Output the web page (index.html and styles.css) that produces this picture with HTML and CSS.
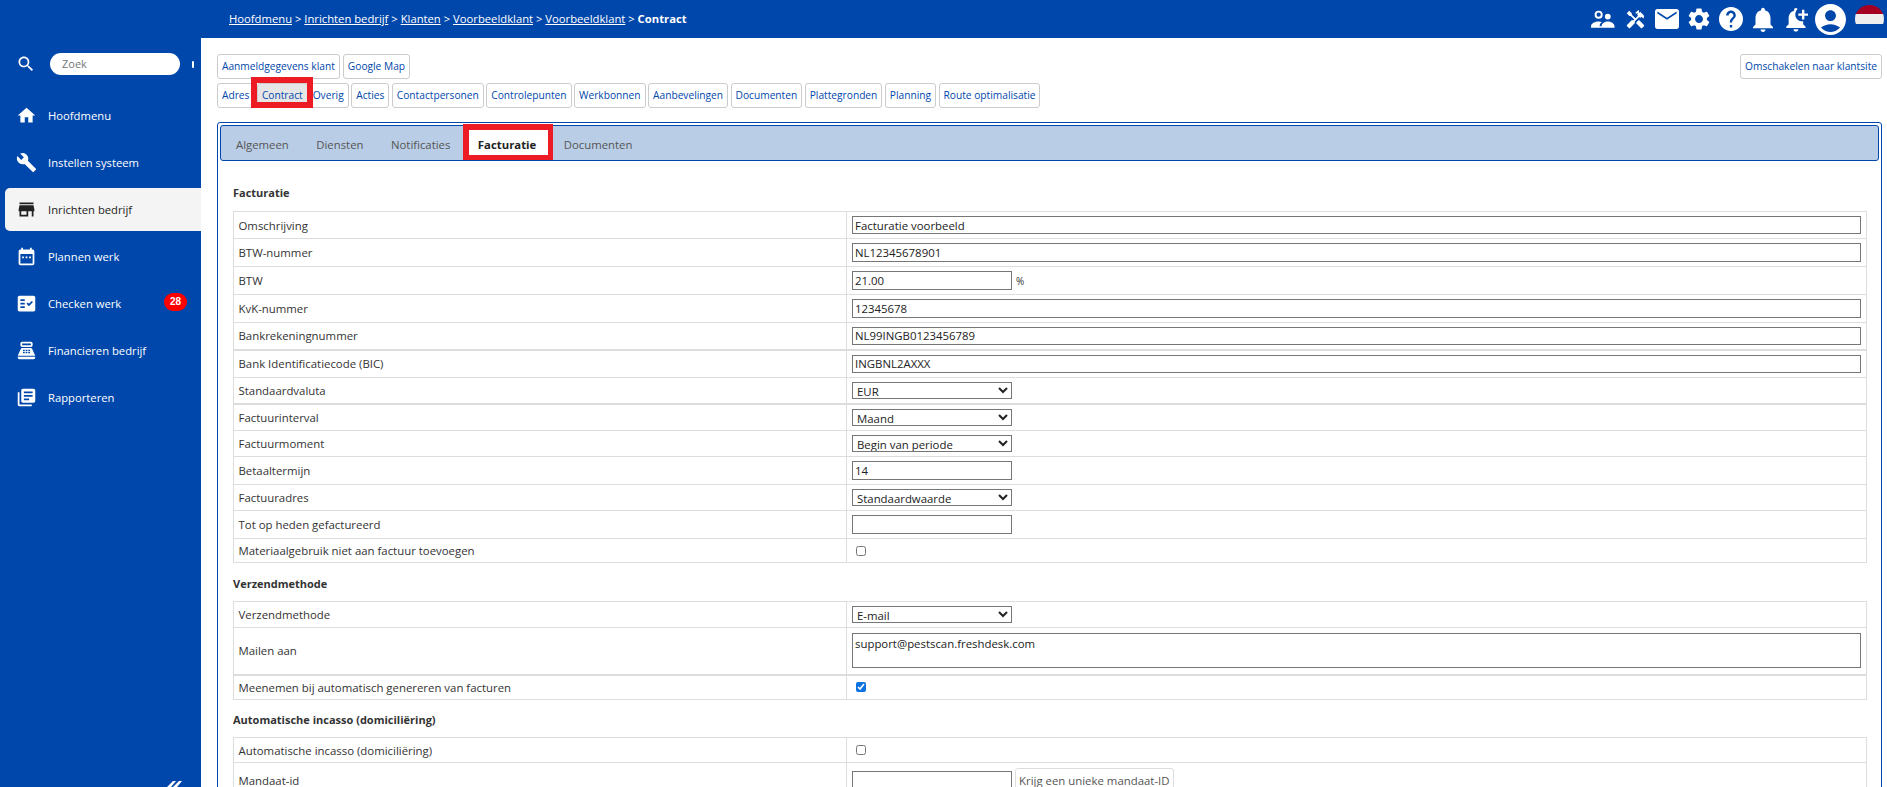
FILE: index.html
```html
<!DOCTYPE html>
<html lang="nl">
<head>
<meta charset="utf-8">
<title>Contract</title>
<link rel="stylesheet" href="styles.css">
</head>
<body>
<svg class="defs" width="0" height="0" aria-hidden="true">
  <symbol id="i-search" viewBox="0 0 24 24"><path d="M15.5 14h-.79l-.28-.27C15.41 12.59 16 11.11 16 9.5 16 5.91 13.09 3 9.5 3S3 5.91 3 9.5 5.91 16 9.5 16c1.61 0 3.09-.59 4.23-1.57l.27.28v.79l5 4.99L20.49 19l-4.99-5zm-6 0C7.01 14 5 11.99 5 9.5S7.01 5 9.5 5 14 7.01 14 9.5 11.99 14 9.5 14z"/></symbol>
  <symbol id="i-home" viewBox="0 0 24 24"><path d="M10 20v-6h4v6h5v-8h3L12 3 2 12h3v8z"/></symbol>
  <symbol id="i-build" viewBox="0 0 24 24"><path d="M22.7 19l-9.1-9.1c.9-2.3.4-5-1.5-6.9-2-2-5-2.4-7.4-1.3L9 6 6 9 1.6 4.7C.4 7.1.9 10.1 2.9 12.1c1.9 1.9 4.6 2.4 6.9 1.5l9.1 9.1c.4.4 1 .4 1.4 0l2.3-2.3c.5-.4.5-1.1.1-1.4z"/></symbol>
  <symbol id="i-store" viewBox="0 0 24 24"><path d="M20 4H4v2h16V4zm1 10v-2l-1-5H4l-1 5v2h1v6h10v-6h4v6h2v-6h1zm-9 4H6v-4h6v4z"/></symbol>
  <symbol id="i-cal" viewBox="0 0 24 24"><path fill-rule="evenodd" d="M19 4h-1V2h-2v2H8V2H6v2H5a2 2 0 0 0-2 2v14a2 2 0 0 0 2 2h14a2 2 0 0 0 2-2V6a2 2 0 0 0-2-2zM5 9h14v11H5zM7 12h2v2H7zM11 12h2v2h-2zM15 12h2v2h-2z"/></symbol>
  <symbol id="i-check" viewBox="0 0 24 24"><path d="M20 3H4c-1.100 0-2 .9-2 2v14c0 1.100.9 2 2 2h16c1.100 0 2-.9 2-2V5c0-1.100-.9-2-2-2zM10 17H5v-2h5v2zm0-4H5v-2h5v2zm0-4H5V7h5v2zm4.820 6L12 12.160l1.410-1.410 1.410 1.420L17.990 9l1.420 1.420L14.820 15z"/></symbol>
  <symbol id="i-pos" viewBox="0 0 24 24"><path fill-rule="evenodd" d="M17 2H7a2 2 0 0 0-2 2v2a2 2 0 0 0 2 2h10a2 2 0 0 0 2-2V4a2 2 0 0 0-2-2zm0 4H7V4h10zM20 22H4a2 2 0 0 1-2-2v-1h20v1a2 2 0 0 1-2 2zM18.530 10.190A2 2 0 0 0 16.700 9H7.300a2 2 0 0 0-1.830 1.190L2 18h20zM8 11h2v1.500H8zm3 0h2v1.500h-2zm3 0h2v1.500h-2zM8 13.500h2V15H8zm3 0h2V15h-2zm3 0h2V15h-2z"/></symbol>
  <symbol id="i-books" viewBox="0 0 24 24"><path d="M4 6H2v14c0 1.100.9 2 2 2h14v-2H4V6zm16-4H8c-1.100 0-2 .9-2 2v12c0 1.100.9 2 2 2h12c1.100 0 2-.9 2-2V4c0-1.100-.9-2-2-2zm-1 9H9V9h10v2zm-4 4H9v-2h6v2zm4-8H9V5h10v2z"/></symbol>
</svg>

<header class="topbar">
  <nav class="crumbs"><a>Hoofdmenu</a> &gt; <a>Inrichten bedrijf</a> &gt; <a>Klanten</a> &gt; <a>Voorbeeldklant</a> &gt; <a>Voorbeeldklant</a> &gt; <b>Contract</b></nav>
  <div class="top-icons">
    <svg class="ti ti-people" viewBox="0 0 26 24"><circle cx="9" cy="7.500" r="3.200" fill="none" stroke="#fff" stroke-width="2"/><circle cx="18.500" cy="9.500" r="3"/><path d="M1 19.500c0-3 4.500-5 8-5 1.200 0 2.400.2 3.500.6C10.800 16 10 17.500 10 19.500H12c0-3 3.500-5 6.500-5s7 2 7 5V21H1z"/></svg>
    <svg class="ti ti-tools" viewBox="0 0 24 24"><path d="M21.670 18.170l-5.300-5.300h-.99l-2.540 2.540v.99l5.300 5.300c.39.39 1.020.39 1.410 0l2.120-2.120c.39-.38.39-1.020 0-1.410z"/><path d="M17.340 10.190l1.410-1.410 2.120 2.120c1.170-1.170 1.170-3.070 0-4.240l-3.540-3.540-1.410 1.410V1.710l-.7-.71-3.540 3.540.71.71h2.830l-1.410 1.410 1.060 1.060-2.890 2.890-4.130-4.130V5.060L4.830 2.040 2 4.870 5.030 7.900h1.410l4.130 4.130-.85.85H7.600l-5.300 5.300c-.39.39-.39 1.020 0 1.410l2.120 2.120c.39.39 1.020.39 1.410 0l5.300-5.300v-2.120l5.150-5.150 1.060 1.050z"/></svg>
    <svg class="ti ti-mail" viewBox="2 4 20 16" preserveAspectRatio="none"><path d="M20 4H4c-1.100 0-2 .9-2 2v12c0 1.100.9 2 2 2h16c1.100 0 2-.9 2-2V6c0-1.100-.9-2-2-2zm0 3.500l-8 5-8-5V6l8 5 8-5v1.500z"/></svg>
    <svg class="ti ti-gear" viewBox="2 2 20 20"><path d="M19.140 12.940c.04-.3.06-.61.06-.94 0-.32-.02-.64-.07-.94l2.030-1.580c.18-.14.23-.41.12-.61l-1.920-3.320c-.12-.22-.37-.29-.59-.22l-2.390.96c-.5-.38-1.030-.7-1.620-.94l-.36-2.540c-.04-.24-.24-.41-.48-.41h-3.840c-.24 0-.43.17-.47.41l-.36 2.540c-.59.24-1.130.57-1.620.94l-2.390-.96c-.22-.08-.47 0-.59.22L2.740 8.870c-.12.21-.08.47.12.61l2.030 1.580c-.05.3-.09.63-.09.94s.02.64.07.94l-2.030 1.580c-.18.14-.23.41-.12.61l1.920 3.320c.12.22.37.29.59.22l2.390-.96c.5.38 1.030.7 1.620.94l.36 2.540c.05.24.24.41.48.41h3.840c.24 0 .44-.17.47-.41l.36-2.540c.59-.24 1.130-.56 1.620-.94l2.390.96c.22.08.47 0 .59-.22l1.920-3.320c.12-.22.07-.47-.12-.61l-2.010-1.580zM12 15.600c-1.980 0-3.600-1.620-3.600-3.600s1.620-3.600 3.600-3.600 3.600 1.620 3.600 3.600-1.620 3.600-3.600 3.600z"/></svg>
    <svg class="ti ti-help" viewBox="2 2 20 20"><path d="M12 2C6.480 2 2 6.480 2 12s4.480 10 10 10 10-4.480 10-10S17.520 2 12 2zm1 17h-2v-2h2v2zm2.070-7.750l-.9.920C13.450 12.900 13 13.500 13 15h-2v-.5c0-1.100.45-2.100 1.170-2.830l1.240-1.260c.37-.36.59-.86.59-1.410 0-1.100-.9-2-2-2s-2 .9-2 2H8c0-2.210 1.790-4 4-4s4 1.790 4 4c0 .88-.36 1.680-.93 2.250z"/></svg>
    <svg class="ti ti-bell" viewBox="4 2 16 20"><path d="M12 22c1.100 0 2-.9 2-2h-4c0 1.100.89 2 2 2zm6-6v-5c0-3.070-1.640-5.640-4.500-6.320V4c0-.83-.67-1.500-1.500-1.500s-1.500.67-1.500 1.500v.68C7.630 5.360 6 7.920 6 11v5l-2 2v1h16v-1l-2-2z"/></svg>
    <svg class="ti ti-bellplus" viewBox="3 2 19 20"><path d="M12 22c1.100 0 2-.9 2-2h-4c0 1.100.89 2 2 2zM18 13.500V16l2 2v1H4v-1l2-2v-5c0-3.080 1.630-5.640 4.500-6.320V4c0-.83.67-1.500 1.500-1.500.6 0 1.100.35 1.350.85C12.200 4.500 11.500 6.100 11.500 8c0 3.300 2.900 5.800 6.500 5.500z"/><path d="M17 4h2v3h3v2h-3v3h-2V9h-3V7h3z"/></svg>
    <svg class="ti ti-account" viewBox="2 2 20 20"><path d="M12 2C6.480 2 2 6.480 2 12s4.480 10 10 10 10-4.480 10-10S17.520 2 12 2zm0 4c1.930 0 3.500 1.570 3.500 3.500S13.930 13 12 13s-3.500-1.570-3.500-3.500S10.070 6 12 6zm0 14c-2.030 0-4.430-.82-6.140-2.880C7.550 15.800 9.680 15 12 15s4.450.8 6.140 2.120C16.430 19.180 14.030 20 12 20z"/></svg>
    <div class="flag"><span class="f-r"></span><span class="f-w"></span><span class="f-b"></span></div>
  </div>
</header>

<div class="shell">
  <aside class="sidebar">
    <div class="search">
      <svg class="ic"><use href="#i-search"/></svg>
      <div class="pill">Zoek</div>
      <span class="tick"></span>
    </div>
    <ul class="menu">
      <li class="item"><svg class="ic"><use href="#i-home"/></svg><span>Hoofdmenu</span></li>
      <li class="item"><svg class="ic"><use href="#i-build"/></svg><span>Instellen systeem</span></li>
      <li class="item active"><svg class="ic"><use href="#i-store"/></svg><span>Inrichten bedrijf</span></li>
      <li class="item"><svg class="ic"><use href="#i-cal"/></svg><span>Plannen werk</span></li>
      <li class="item"><svg class="ic"><use href="#i-check"/></svg><span>Checken werk</span><em class="badge">28</em></li>
      <li class="item"><svg class="ic"><use href="#i-pos"/></svg><span>Financieren bedrijf</span></li>
      <li class="item"><svg class="ic"><use href="#i-books"/></svg><span>Rapporteren</span></li>
    </ul>
    <svg class="logo" viewBox="0 0 18 6"><path d="M2 6l6-6h3L6 6zM8 6l6-6h3l-5 6z"/></svg>
  </aside>

  <main class="main">
    <div class="btn-head">
      <div class="btns">
        <a class="btn">Aanmeldgegevens klant</a>
        <a class="btn">Google Map</a>
      </div>
      <a class="btn">Omschakelen naar klantsite</a>
    </div>
    <div class="btns second">
      <a class="btn">Adres</a>
      <a class="btn on mark">Contract</a>
      <a class="btn overig">Overig</a>
      <a class="btn">Acties</a>
      <a class="btn">Contactpersonen</a>
      <a class="btn">Controlepunten</a>
      <a class="btn">Werkbonnen</a>
      <a class="btn">Aanbevelingen</a>
      <a class="btn">Documenten</a>
      <a class="btn">Plattegronden</a>
      <a class="btn">Planning</a>
      <a class="btn">Route optimalisatie</a>
    </div>

    <section class="panel">
      <div class="tabs">
        <a class="tab">Algemeen</a>
        <a class="tab">Diensten</a>
        <a class="tab">Notificaties</a>
        <a class="tab sel mark2">Facturatie</a>
        <a class="tab">Documenten</a>
      </div>

      <h3 class="h first">Facturatie</h3>
      <table class="form">
        <tr class="r27"><td>Omschrijving</td><td><input class="full h18" value="Facturatie voorbeeld"></td></tr>
        <tr class="r28"><td>BTW-nummer</td><td><input class="full" value="NL12345678901"></td></tr>
        <tr class="r28"><td>BTW</td><td><input class="short" value="21.00"><span class="unit">%</span></td></tr>
        <tr class="r28"><td>KvK-nummer</td><td><input class="full" value="12345678"></td></tr>
        <tr class="r27 thick"><td>Bankrekeningnummer</td><td><input class="full h18" value="NL99INGB0123456789"></td></tr>
        <tr class="r28"><td>Bank Identificatiecode (BIC)</td><td><input class="full h18" value="INGBNL2AXXX"></td></tr>
        <tr class="r26 thick"><td>Standaardvaluta</td><td><select class="short"><option>EUR</option></select></td></tr>
        <tr class="r27"><td>Factuurinterval</td><td><select class="short"><option>Maand</option></select></td></tr>
        <tr class="r26"><td>Factuurmoment</td><td><select class="short"><option>Begin van periode</option></select></td></tr>
        <tr class="r28"><td>Betaaltermijn</td><td><input class="short" value="14"></td></tr>
        <tr class="r26"><td>Factuuradres</td><td><select class="short"><option>Standaardwaarde</option></select></td></tr>
        <tr class="r28"><td>Tot op heden gefactureerd</td><td><input class="short"></td></tr>
        <tr class="r24"><td>Materiaalgebruik niet aan factuur toevoegen</td><td><input type="checkbox"></td></tr>
      </table>

      <h3 class="h">Verzendmethode</h3>
      <table class="form">
        <tr class="r26"><td>Verzendmethode</td><td><select class="short"><option>E-mail</option></select></td></tr>
        <tr class="r47 thick"><td>Mailen aan</td><td><textarea class="full area">support@pestscan.freshdesk.com</textarea></td></tr>
        <tr class="r25"><td>Meenemen bij automatisch genereren van facturen</td><td><input type="checkbox" checked></td></tr>
      </table>

      <h3 class="h last">Automatische incasso (domiciliëring)</h3>
      <table class="form">
        <tr class="r25"><td>Automatische incasso (domiciliëring)</td><td><input type="checkbox"></td></tr>
        <tr class="r36"><td>Mandaat-id</td><td><input class="short"><button class="uniq">Krijg een unieke mandaat-ID</button></td></tr>
      </table>
    </section>
  </main>
</div>
</body>
</html>
```
FILE: styles.css
```css
* { box-sizing: border-box; }
html, body { margin: 0; height: 787px; overflow: hidden; }
body { font-family: "Open Sans", "Noto Sans", sans-serif; font-size: 11px; color: #333; background: #fff; }
.defs { position: absolute; }

.topbar { height: 38px; background: #0047ab; color: #fff; display: flex; align-items: center; padding-left: 229px; padding-right: 3px; }
.crumbs { font-size: 11.25px; flex: 1; margin-top: -1px; }
.crumbs a { text-decoration: underline; }
.top-icons { display: flex; align-items: center; fill: #fff; }
.ti { display: block; fill: #fff; }
.ti-people { width: 25px; height: 24px; margin-right: 10px; }
.ti-tools { width: 21px; height: 21px; margin-right: 9px; }
.ti-mail { width: 24px; height: 20px; margin-right: 9px; }
.ti-gear { width: 22px; height: 22px; margin-right: 9px; }
.ti-help { width: 24px; height: 24px; margin-right: 10px; }
.ti-bell { width: 20px; height: 25px; margin-right: 12px; }
.ti-bellplus { width: 23px; height: 25px; margin-right: 7px; }
.ti-account { width: 31px; height: 31px; margin-right: 9px; }
.flag { width: 29px; height: 28px; border-radius: 50%; overflow: hidden; display: flex; flex-direction: column; }
.flag span { flex: 1; }
.f-r { background: #a50021; }
.f-w { background: #eee; }
.f-b { background: #0047ab; }

.shell { display: flex; height: 749px; }
.sidebar { width: 201px; flex: none; background: #0047ab; color: #fff; position: relative; padding-left: 5px; overflow: hidden; }
.ic { width: 21px; height: 21px; fill: currentColor; flex: none; display: block; }
.search { display: flex; align-items: center; height: 22px; margin-top: 15px; margin-left: 11px; }
.search .ic { width: 20px; height: 20px; margin-right: 14px; }
.pill { width: 130px; height: 22px; border-radius: 11px; background: #fff; color: #777; font-size: 11px; line-height: 21px; padding-left: 12px; }
.tick { width: 2px; height: 7px; background: #fff; margin-left: 12px; border-radius: 1px; }
.menu { list-style: none; margin: 19px 0 0; padding: 0; display: flex; flex-direction: column; gap: 4px; }
.item { height: 43px; display: flex; align-items: center; padding-left: 11px; font-size: 11.25px; border-radius: 5px 0 0 5px; color: #fff; }
.item .ic { margin-right: 11px; }
.item span { flex: 1; }
.active { background: #f4f4f4; color: #222; }
.badge { width: 23px; height: 18px; border-radius: 9px; background: #f00; color: #fff; font-style: normal; font-family: "Liberation Sans", sans-serif; font-weight: 700; font-size: 10px; line-height: 17px; text-align: center; margin-right: 14px; margin-top: -3px; }
.logo { position: absolute; left: 165px; bottom: 0; width: 18px; height: 6px; fill: #fff; }

.main { flex: 1; min-width: 0; padding: 16px 5px 0 16px; overflow: hidden; }
.btn-head { display: flex; justify-content: space-between; margin-bottom: 4px; }
.btns { display: flex; gap: 3px; }
.second { margin-bottom: 14px; gap: 2.5px; }
.btn { display: block; height: 25px; line-height: 23px; padding: 0 4px; border: 1px solid #ccc; border-radius: 3px; background: #fff; color: #0047ab; font-size: 10.2px; white-space: nowrap; }
.on { background: #e6e6e6; }
.mark { position: relative; z-index: 1; }
.mark::after { content: ""; position: absolute; inset: -7px -6px -1px -7px; border: 6px solid #ed1c24; }
.overig { margin-left: -2.5px; }

.panel { border: 1px solid #0047ab; border-radius: 3px; padding: 2px; height: 700px; }
.tabs { height: 36px; background: #b9cde6; border: 1px solid #0047ab; border-radius: 3px; display: flex; align-items: stretch; padding-left: 15px; gap: 27.5px; }
.tab { color: #555; font-size: 11.35px; line-height: 38px; }
.sel { position: relative; color: #222; font-weight: 700; background: #fff; margin: 4px -12px 0 -9px; padding: 0 12px 0 9px; line-height: 30px; height: 25px; }
.mark2::after { content: ""; position: absolute; inset: -6px -5px -5px -6px; border: solid #ed1c24; border-width: 6px 5px 5px 6px; }
.h { margin: 13px 0 10px 13px; font-size: 11px; font-weight: 700; color: #333; line-height: 15px; height: 15px; }
.first { margin-top: 24px; margin-bottom: 11px; }
.last { margin-top: 12px; }
.form { width: 1634px; margin-left: 13px; border-collapse: collapse; table-layout: fixed; }
.form td { border: 1px solid #ddd; padding: 0 5px; font-size: 11.4px; vertical-align: middle; }
.form td:first-child { width: 613px; padding-left: 4.5px; }
.r24 td { height: 24px; }
.r25 td { height: 25px; }
.r26 td { height: 26px; }
.r27 td { height: 27px; }
.r28 td { height: 28px; }
.r36 td { height: 36px; }
.r47 td { height: 47px; }
.thick td { border-bottom-width: 2px; }
input, select, textarea, .uniq { font-family: "Open Sans", sans-serif; font-size: 11.4px; color: #222; }
input:not([type]) { height: 19px; border: 1px solid #767676; padding: 0 2px; border-radius: 0; background: #fff; display: inline-block; vertical-align: middle; }
input.h18 { height: 18px; }
select { height: 17px; border: 1px solid #767676; padding: 0; background: #fff; display: block; }
.full { width: 100%; }
.short { width: 160px; }
.unit { margin-left: 4px; font-size: 10px; vertical-align: middle; }
.area { height: 35px; border: 1px solid #767676; padding: 2px; display: block; resize: none; margin: 0; }
input[type="checkbox"] { margin: 0 0 0 4px; width: 10px; height: 10px; display: block; accent-color: #0b72e0; }
.uniq { height: 26px; margin-left: 3px; background: #fff; border: 1px solid #ddd; border-radius: 3px; padding: 0 3px; color: #555; vertical-align: middle; }
```
